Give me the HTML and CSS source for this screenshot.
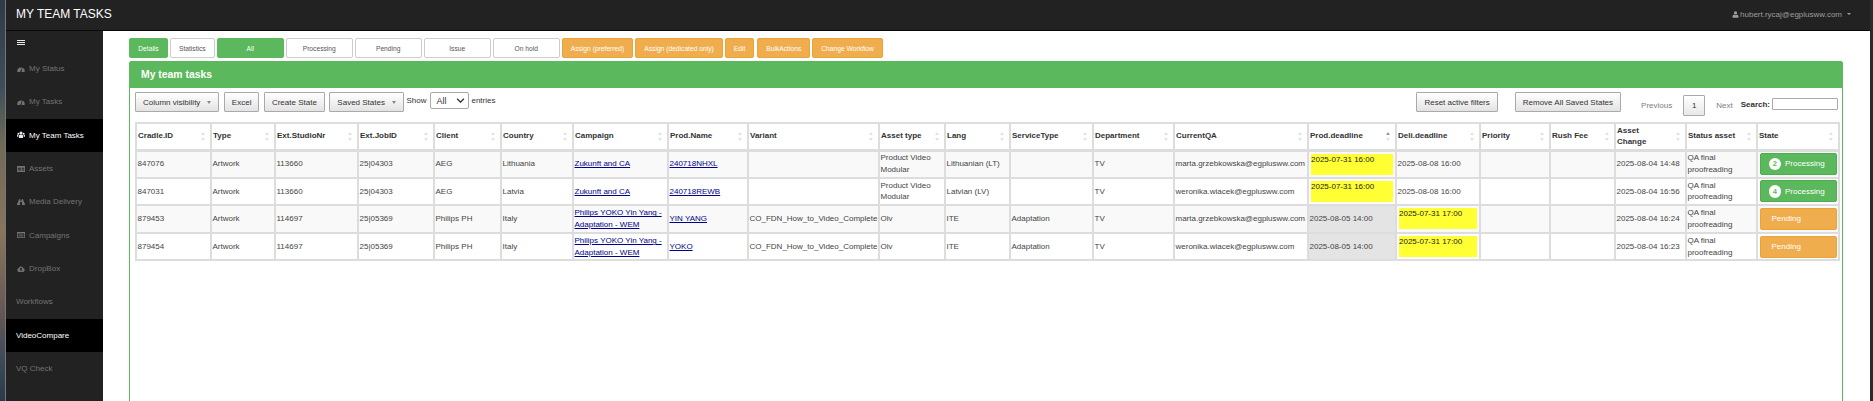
FILE: index.html
```html
<!DOCTYPE html>
<html lang="en">
<head>
<meta charset="utf-8">
<title>My Team Tasks</title>
<link rel="stylesheet" href="styles.css">
</head>
<body>
<div class="screen">
  <div class="wallpaper"></div>
  <div class="app">
    <header class="navbar">
      <div class="brand">MY TEAM TASKS</div>
      <div class="user">
        <svg class="user-icon" viewBox="0 0 10 10"><circle cx="5" cy="2.8" r="2.3"/><path d="M0.8 9.5V7.4C0.8 5.9 2 5.2 3 5.2L5 6.2 7 5.2C8 5.2 9.2 5.9 9.2 7.4V9.5Z"/></svg>
        <span>hubert.rycaj@egplusww.com</span>
        <span class="user-caret"></span>
      </div>
    </header>
    <div class="main">
      <nav class="sidebar">
        <div class="burger"><i></i><i></i><i></i></div>
        <a class="nav-item">
          <svg class="nav-icon" viewBox="0 0 10 10"><path d="M0.3 7.8A4.7 4.7 0 1 1 9.7 7.8Q9.7 8.5 9.2 8.7H0.8Q0.3 8.5 0.3 7.8ZM4.2 7.5A1 1 0 1 0 5.8 7.5L6.8 3.6 6.2 3.4 4.9 6.8Q4.4 6.9 4.2 7.5Z" fill-rule="evenodd"/></svg>
          My Status</a>
        <a class="nav-item">
          <svg class="nav-icon" viewBox="0 0 10 10"><path d="M0.3 7.8A4.7 4.7 0 1 1 9.7 7.8Q9.7 8.5 9.2 8.7H0.8Q0.3 8.5 0.3 7.8ZM4.2 7.5A1 1 0 1 0 5.8 7.5L6.8 3.6 6.2 3.4 4.9 6.8Q4.4 6.9 4.2 7.5Z" fill-rule="evenodd"/></svg>
          My Tasks</a>
        <a class="nav-item active">
          <svg class="nav-icon" viewBox="0 0 10 10"><circle cx="5" cy="2.4" r="1.9"/><circle cx="1.7" cy="3.4" r="1.2"/><circle cx="8.3" cy="3.4" r="1.2"/><path d="M2.4 8.8V6.4C2.4 5.2 3.2 4.7 4 4.7H6C6.8 4.7 7.6 5.2 7.6 6.4V8.8ZM0 7.2V5.9C0 5.1 .6 4.8 1.2 4.8H2C1.7 5.2 1.6 5.7 1.6 6.4V7.2ZM10 7.2V5.9C10 5.1 9.4 4.8 8.8 4.8H8C8.3 5.2 8.4 5.7 8.4 6.4V7.2Z"/></svg>
          My Team Tasks</a>
        <a class="nav-item">
          <svg class="nav-icon" viewBox="0 0 10 10"><path d="M0 1.2H10V8.8H0ZM1 3.4V4.6H5V3.4ZM6 3.4V4.6H9V3.4ZM1 5.6V6.8H5V5.6ZM6 5.6V6.8H9V5.6Z" fill-rule="evenodd"/></svg>
          Assets</a>
        <a class="nav-item">
          <svg class="nav-icon" viewBox="0 0 10 10"><path d="M2.4 1.5H4.2V3.4H5.8V1.5H7.6L8.4 4.5 10 7.4V8.8H6.2V5H3.8V8.8H0V7.4L1.6 4.5Z"/></svg>
          Media Delivery</a>
        <a class="nav-item">
          <svg class="nav-icon" viewBox="0 0 10 10"><path d="M0 1.2H10V8.8H0ZM1 3.2V7.8H9V3.2Z" fill-rule="evenodd"/><path d="M2 4.2H8V7H2Z" opacity=".6"/></svg>
          Campaigns</a>
        <a class="nav-item">
          <svg class="nav-icon" viewBox="0 0 10 10"><path d="M2.6 8.6A2.3 2.3 0 0 1 2 4.1 3 3 0 0 1 7.7 3.7 2.5 2.5 0 0 1 7.5 8.6ZM5 3.2 3 5.4H4.2V7.4H5.8V5.4H7Z" fill-rule="evenodd"/></svg>
          DropBox</a>
        <a class="nav-item plain">Workflows</a>
        <a class="nav-item plain active">VideoCompare</a>
        <a class="nav-item plain">VQ Check</a>
      </nav>
      <main class="content">
        <div class="actions">
          <button class="tab green details">Details</button>
          <button class="tab white">Statistics</button>
          <button class="tab green wide">All</button>
          <button class="tab white wide">Processing</button>
          <button class="tab white wide">Pending</button>
          <button class="tab white wide">Issue</button>
          <button class="tab white wide">On hold</button>
          <button class="tab orange">Assign (preferred)</button>
          <button class="tab orange">Assign (dedicated only)</button>
          <button class="tab orange edit">Edit</button>
          <button class="tab orange">BulkActions</button>
          <button class="tab orange">Change Workflow</button>
        </div>
        <section class="panel">
          <h2 class="panel-title">My team tasks</h2>
          <div class="panel-body">
            <div class="toolbar">
              <button class="tool">Column visibility<span class="tool-caret"></span></button>
              <button class="tool">Excel</button>
              <button class="tool">Create State</button>
              <button class="tool">Saved States<span class="tool-caret"></span></button>
              <label class="length">Show
                <span class="select-wrap">
                  <select class="length-select"><option>All</option></select>
                  <svg class="select-arrow" viewBox="0 0 10 6"><path d="M1 1 5 5 9 1"/></svg>
                </span>
                entries</label>
              <div class="toolbar-right">
                <button class="tool">Reset active filters</button>
                <button class="tool">Remove All Saved States</button>
                <div class="pager">
                  <span class="pager-link">Previous</span>
                  <span class="pager-page">1</span>
                  <span class="pager-link">Next</span>
                </div>
                <label class="search">Search:<input class="search-input" type="text"></label>
              </div>
            </div>
            <table class="tasks">
              <thead>
                <tr>
                  <th>Cradle.ID</th><th>Type</th><th>Ext.StudioNr</th><th>Ext.JobID</th><th>Client</th><th>Country</th><th>Campaign</th><th>Prod.Name</th><th>Variant</th><th>Asset type</th><th>Lang</th><th>ServiceType</th><th>Department</th><th>CurrentQA</th><th class="sorted">Prod.deadline</th><th>Deli.deadline</th><th>Priority</th><th>Rush Fee</th><th>Asset<br>Change</th><th>Status asset</th><th>State</th>
                </tr>
              </thead>
              <tbody>
                <tr>
                  <td>847076</td><td>Artwork</td><td>113660</td><td>25|04303</td><td>AEG</td><td>Lithuania</td><td><a href="#">Zukunft and CA</a></td><td><a href="#">240718NHXL</a></td><td></td><td>Product Video Modular</td><td>Lithuanian (LT)</td><td></td><td>TV</td><td>marta.grzebkowska@egplusww.com</td><td class="flag"><span class="late">2025-07-31 16:00</span></td><td>2025-08-08 16:00</td><td></td><td></td><td>2025-08-04 14:48</td><td>QA final proofreading</td><td class="state"><span class="pill processing"><b class="count">2</b>Processing</span></td>
                </tr>
                <tr>
                  <td>847031</td><td>Artwork</td><td>113660</td><td>25|04303</td><td>AEG</td><td>Latvia</td><td><a href="#">Zukunft and CA</a></td><td><a href="#">240718REWB</a></td><td></td><td>Product Video Modular</td><td>Latvian (LV)</td><td></td><td>TV</td><td>weronika.wiacek@egplusww.com</td><td class="flag"><span class="late">2025-07-31 16:00</span></td><td>2025-08-08 16:00</td><td></td><td></td><td>2025-08-04 16:56</td><td>QA final proofreading</td><td class="state"><span class="pill processing"><b class="count">4</b>Processing</span></td>
                </tr>
                <tr>
                  <td>879453</td><td>Artwork</td><td>114697</td><td>25|05369</td><td>Philips PH</td><td>Italy</td><td><a href="#">Philips YOKO Yin Yang - Adaptation - WEM</a></td><td><a href="#">YIN YANG</a></td><td>CO_FDN_How_to_Video_Complete</td><td>Olv</td><td>ITE</td><td>Adaptation</td><td>TV</td><td>marta.grzebkowska@egplusww.com</td><td class="muted">2025-08-05 14:00</td><td class="flag"><span class="late">2025-07-31 17:00</span></td><td></td><td></td><td>2025-08-04 16:24</td><td>QA final proofreading</td><td class="state"><span class="pill pending">Pending</span></td>
                </tr>
                <tr>
                  <td>879454</td><td>Artwork</td><td>114697</td><td>25|05369</td><td>Philips PH</td><td>Italy</td><td><a href="#">Philips YOKO Yin Yang - Adaptation - WEM</a></td><td><a href="#">YOKO</a></td><td>CO_FDN_How_to_Video_Complete</td><td>Olv</td><td>ITE</td><td>Adaptation</td><td>TV</td><td>weronika.wiacek@egplusww.com</td><td class="muted">2025-08-05 14:00</td><td class="flag"><span class="late">2025-07-31 17:00</span></td><td></td><td></td><td>2025-08-04 16:23</td><td>QA final proofreading</td><td class="state"><span class="pill pending">Pending</span></td>
                </tr>
              </tbody>
            </table>
          </div>
        </section>
      </main>
    </div>
  </div>
  <div class="edge"></div>
</div>
</body>
</html>
```
FILE: styles.css
```css
* { box-sizing: border-box; }
html, body { margin: 0; height: 100%; overflow: hidden; }
body { font-family: "Liberation Sans", Arial, sans-serif; font-size: 8px; color: #333; background: #fff; }
button { font-family: inherit; }

.screen { display: flex; width: 1873px; height: 401px; overflow: hidden; }
.wallpaper { width: 6px; flex: none; border-right: 1px solid #777; background: linear-gradient(180deg, #2d3b45 0%, #3f4f5a 22%, #6f6a58 36%, #8a745c 58%, #6b5a55 76%, #3c4a58 90%, #2a3a48 100%); }
.edge { width: 3px; flex: none; background: #2b2b2b; }
.app { flex: 1; min-width: 0; display: flex; flex-direction: column; }

.navbar { height: 31px; flex: none; display: flex; align-items: center; justify-content: space-between; padding: 0 19px 2px 10px; background: #222; border-bottom: 1px solid #080808; }
.brand { color: #fff; font-size: 12px; }
.user { display: flex; align-items: center; color: #9d9d9d; font-size: 8px; }
.user-icon { width: 7px; height: 7px; margin-right: 1.5px; fill: #9d9d9d; }
.user-caret { margin-left: 5px; border-top: 2px solid #9d9d9d; border-left: 2px solid transparent; border-right: 2px solid transparent; }

.main { flex: 1; display: flex; min-height: 0; }
.sidebar { width: 97px; flex: none; background: #222; }
.burger { height: 21px; padding: 9px 0 0 11px; }
.burger i { display: block; width: 8px; height: 1.4px; margin-bottom: .6px; background: #e8e8e8; }
.nav-item { display: flex; align-items: center; height: 33.33px; padding-left: 11px; color: #737373; font-size: 8px; }
.nav-item.plain { padding-left: 10px; }
.nav-item.active { background: #000; color: #fff; }
.nav-icon { width: 8px; height: 8px; margin-right: 4px; fill: #737373; flex: none; }
.nav-item.active .nav-icon { fill: #e8e8e8; }

.content { flex: 1; min-width: 0; padding: 7px 27px 0 26px; background: #fff; }
.actions { display: flex; gap: 2px; height: 20px; }
.tab { height: 20px; padding: 0 8px; border-radius: 2px; border: 1px solid; font-size: 6.7px; white-space: nowrap; }
.tab.details { padding: 0 8.25px; }
.tab.edit { margin-right: 1px; }
.tab.wide { width: 67px; padding: 0; }
.tab.green { background: #5cb85c; border-color: #5cb85c; color: #fff; }
.tab.white { background: #fff; border-color: #ccc; color: #555; }
.tab.orange { background: #f0ad4e; border-color: #eea236; color: #fff; }

.panel { margin-top: 3px; height: 400px; border: 1px solid #5cb85c; border-radius: 2px 2px 0 0; }
.panel-title { margin: 0; height: 26px; padding: 0 0 1px 11px; display: flex; align-items: center; background: #5cb85c; color: #fff; font-size: 10.4px; font-weight: 700; }
.panel-body { padding: 4px 4px 0 5px; }

.toolbar { display: flex; align-items: flex-start; height: 30px; }
.tool { height: 20px; padding: 0 7px; margin-right: 4.5px; display: flex; align-items: center; font-size: 8px; color: #333; border: 1px solid #aaa; border-radius: 1px; background: linear-gradient(180deg, #fff 0%, #e3e3e3 100%); white-space: nowrap; }
.tool-caret { margin-left: 7px; border-top: 3px solid #888; border-left: 2px solid transparent; border-right: 2px solid transparent; }
.length { display: flex; align-items: flex-start; gap: 2px; margin-left: -2px; line-height: 18px; color: #333; }
.select-wrap { position: relative; display: block; width: 39px; height: 17px; margin-left: 2px; }
.length-select { appearance: none; display: block; width: 39px; height: 17px; font: 9px "Liberation Sans", Arial, sans-serif; color: #333; background: #fff; border: 1px solid #aaa; border-radius: 2px; padding: 0 5px; }
.select-arrow { position: absolute; right: 4px; top: 6px; width: 9px; height: 5px; fill: none; stroke: #333; stroke-width: 1.6; }
.toolbar-right { margin-left: auto; display: flex; align-items: flex-start; }
.toolbar-right .tool { margin-right: 20px; }
.toolbar-right .tool:first-child { margin-right: 17px; }
.pager { display: flex; align-items: center; height: 22px; margin-top: 2px; color: #7d7d7d; }
.pager-page { width: 22px; height: 21px; margin: 0 11px 0 11px; display: flex; align-items: center; justify-content: center; color: #333; border: 1px solid #aaa; border-radius: 1px; background: linear-gradient(180deg, #fff 0%, #e8e8e8 100%); }
.search { display: flex; align-items: center; gap: 2px; height: 12px; margin: 6px 0 0 8px; font-weight: 700; }
.search-input { width: 66px; height: 12px; padding: 0; border: 1px solid #aaa; border-radius: 1px; background: #fff; }

.tasks { width: 1704px; table-layout: fixed; border-collapse: collapse; font-size: 8px; color: #444; }
.tasks th, .tasks td { border: 2px solid #ddd; padding: 0 0 0 .5px; vertical-align: middle; line-height: 11.6px; text-align: left; }
.tasks th { position: relative; height: 27px; border-bottom-width: 3px; padding: 0 14px 0 1px; font-weight: 700; color: #333; background: #fff; }
.tasks td { height: 27.6px; }
.tasks tbody tr:nth-child(odd) td { background: #f9f9f9; }
.tasks tbody tr:nth-child(even) td { background: #fff; }
.tasks tbody tr td.muted { background: #e4e4e4; }
.tasks a { color: #00008b; text-decoration: underline; }

.tasks th::before, .tasks th::after { content: ""; position: absolute; right: 5px; border-left: 2.5px solid transparent; border-right: 2.5px solid transparent; }
.tasks th::before { top: 8px; border-bottom: 3px solid #e2e2e2; }
.tasks th::after { top: 14px; border-top: 3px solid #e2e2e2; }
.tasks th.sorted::before { border-bottom-color: #999; }

.tasks th:nth-child(1) { width: 75px; }
.tasks th:nth-child(2) { width: 64px; }
.tasks th:nth-child(3) { width: 83px; }
.tasks th:nth-child(4) { width: 76px; }
.tasks th:nth-child(5) { width: 67px; }
.tasks th:nth-child(6) { width: 72px; }
.tasks th:nth-child(7) { width: 95px; }
.tasks th:nth-child(8) { width: 80px; }
.tasks th:nth-child(9) { width: 131px; }
.tasks th:nth-child(10) { width: 66px; }
.tasks th:nth-child(11) { width: 65px; }
.tasks th:nth-child(12) { width: 83px; }
.tasks th:nth-child(13) { width: 81px; }
.tasks th:nth-child(14) { width: 134px; }
.tasks th:nth-child(15) { width: 88px; }
.tasks th:nth-child(16) { width: 84px; }
.tasks th:nth-child(17) { width: 70px; }
.tasks th:nth-child(18) { width: 65px; }
.tasks th:nth-child(19) { width: 71px; }
.tasks th:nth-child(20) { width: 71px; }
.tasks th:nth-child(21) { width: 82px; }

.tasks td.flag { padding: 0 2px 0 2px; }
.late { display: block; height: 21px; line-height: 10px; padding-top: 1px; background: #ffff33; color: #222; }
.tasks td.state { padding: 0 1px; }
.pill { display: flex; align-items: center; width: 77px; height: 22px; margin: 0 auto; border-radius: 2px; border: 1px solid; color: #fff; font-size: 8px; }
.pill.processing { background: #5cb85c; border-color: #4cae4c; padding-left: 8px; }
.pill.pending { background: #f0ad4e; border-color: #eea236; padding-left: 11px; }
.count { width: 12.5px; height: 12.5px; margin-right: 4px; display: flex; align-items: center; justify-content: center; border-radius: 50%; background: #fff; color: #5cb85c; font-size: 7.5px; }
```
